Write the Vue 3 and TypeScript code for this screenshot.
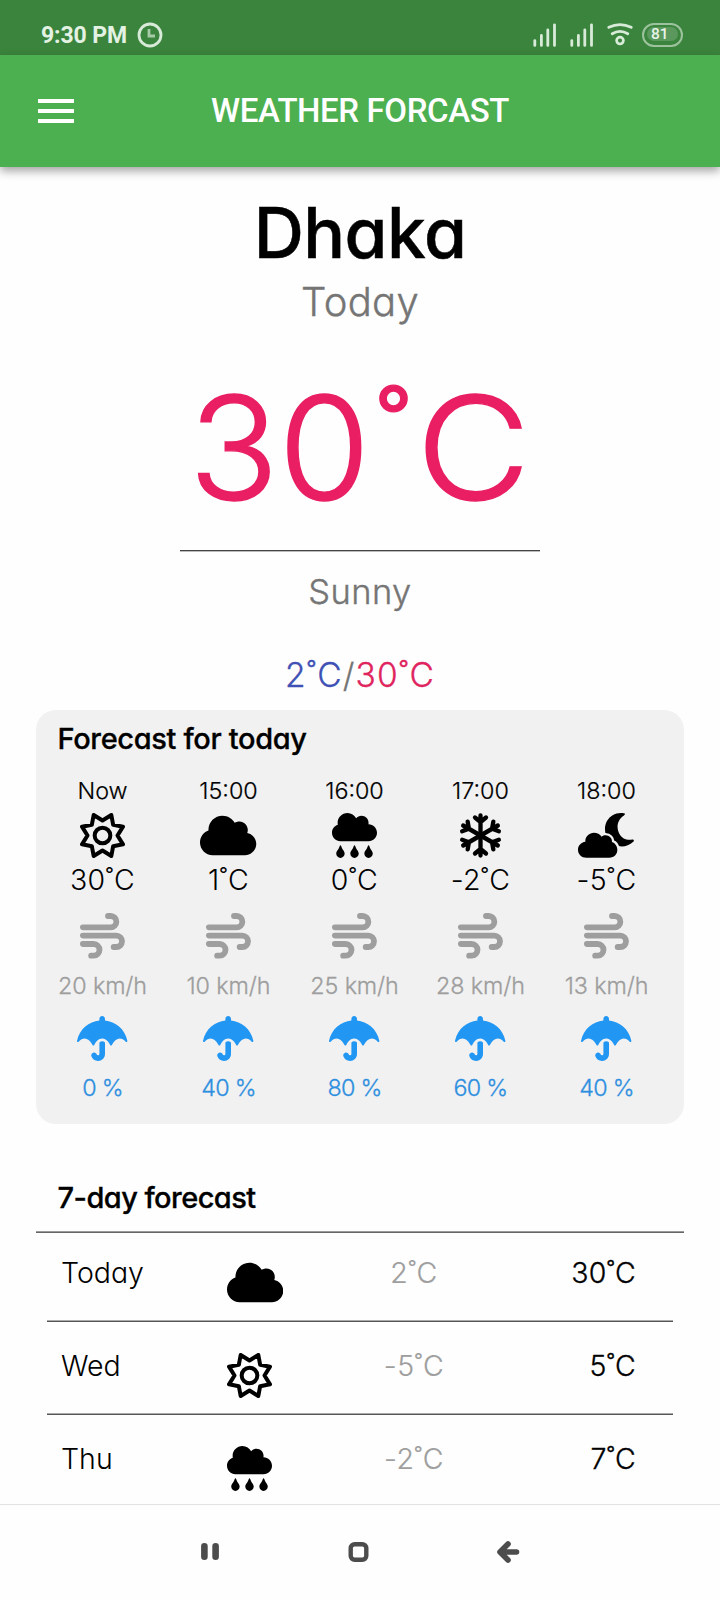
<script setup lang="ts">
type Weather = 'sun' | 'cloud' | 'rain' | 'snow' | 'night'

interface Hour { time: string; icon: Weather; temp: string; wind: string; rain: string }
interface Day { name: string; icon: Weather; low: string; high: string }

const hours: Hour[] = [
  { time: 'Now', icon: 'sun', temp: '30˚C', wind: '20 km/h', rain: '0 %' },
  { time: '15:00', icon: 'cloud', temp: '1˚C', wind: '10 km/h', rain: '40 %' },
  { time: '16:00', icon: 'rain', temp: '0˚C', wind: '25 km/h', rain: '80 %' },
  { time: '17:00', icon: 'snow', temp: '-2˚C', wind: '28 km/h', rain: '60 %' },
  { time: '18:00', icon: 'night', temp: '-5˚C', wind: '13 km/h', rain: '40 %' },
]

const days: Day[] = [
  { name: 'Today', icon: 'cloud', low: '2˚C', high: '30˚C' },
  { name: 'Wed', icon: 'sun', low: '-5˚C', high: '5˚C' },
  { name: 'Thu', icon: 'rain', low: '-2˚C', high: '7˚C' },
]

const viewBoxes: Record<Weather, string> = {
  sun: '-67.5 -67.5 135 135',
  cloud: '0 0 640 512',
  rain: '0 0 512 512',
  snow: '-67.5 -67.5 135 135',
  night: '0 0 169 135',
}

// Inner markup of each weather icon, drawn in the viewBox above.
const shapes: Record<Weather, string> = {
  sun:
    '<g fill="none" stroke="currentColor" stroke-width="12" stroke-linejoin="round">' +
    '<path d="M-26.5 -61.5L0 -45L26.5 -61.5L32 -32L61.5 -26.5L45 0L61.5 26.5L32 32L26.5 61.5L0 45L-26.5 61.5L-32 32L-61.5 26.5L-45 0L-61.5 -26.5L-32 -32Z"/>' +
    '<circle r="23.5"/></g>',
  cloud:
    '<path d="M537.6 226.6c4.1-10.7 6.4-22.4 6.4-34.6 0-53-43-96-96-96-19.7 0-38.1 6-53.3 16.2C367 64.2 315.3 32 256 32c-88.4 0-160 71.6-160 160 0 2.7.1 5.4.2 8.1C40.2 219.8 0 273.2 0 336c0 79.5 64.5 144 144 144h368c70.7 0 128-57.3 128-128 0-61.9-44-113.6-102.4-125.4z"/>',
  rain:
    '<path d="M416 128c-.6 0-1.1.2-1.6.2 1.1-5.2 1.6-10.6 1.6-16.2 0-44.2-35.8-80-80-80-24.6 0-46.3 11.3-61 28.8C256.4 24.8 219.3 0 176 0 114.1 0 64 50.1 64 112c0 7.3.8 14.3 2.1 21.2C27.8 145.8 0 181.5 0 224c0 53 43 96 96 96h320c53 0 96-43 96-96s-43-96-96-96zM88 374.2c-12.8 44.4-40 56.4-40 87.7 0 27.7 21.5 50.1 48 50.1s48-22.4 48-50.1c0-31.4-27.2-43.1-40-87.7-2.2-8.1-13.5-8.5-16 0zm160 0c-12.8 44.4-40 56.4-40 87.7 0 27.7 21.5 50.1 48 50.1s48-22.4 48-50.1c0-31.4-27.2-43.1-40-87.7-2.2-8.1-13.5-8.5-16 0zm160 0c-12.8 44.4-40 56.4-40 87.7 0 27.7 21.5 50.1 48 50.1s48-22.4 48-50.1c0-31.4-27.2-43.1-40-87.7-2.2-8.1-13.5-8.5-16 0z"/>',
  snow:
    '<g fill="none" stroke="currentColor" stroke-width="13" stroke-linecap="round" stroke-linejoin="round">' +
    [0, 60, 120, 180, 240, 300]
      .map((a) => `<path transform="rotate(${a})" d="M0 0V-60M-16.5 -54L0 -40L16.5 -54"/>`)
      .join('') +
    '</g>',
  night:
    '<path d="M137 1C143 1 141 5 137 8C118 20 114 44 124 62C132 77 146 82 160 80C166 79 170 82 166 86C145 106 114 104 96 85C72 60 78 22 104 7C114 1 126 -1 137 1Z"/>' +
    '<path d="M102 87C103 76 94 67 83 67C79 67 74 68 71 71C66 63 57 59 48 59C34 59 22 70 22 84V86C9 88 0 97 0 110C0 124 11 134 25 134H94C108 134 118 124 118 111C118 99 111 90 102 87Z" stroke="#f1f1f1" stroke-width="14" stroke-linejoin="round" paint-order="stroke"/>',
}
</script>

<template>
  <div class="screen">
    <header class="status">
      <div class="status-left">
        <span class="clock">9:30 PM</span>
        <svg width="26" height="26" viewBox="0 0 26 26" fill="none" stroke="#d8ebd8">
          <circle cx="13" cy="13" r="11" stroke-width="2.8" />
          <path d="M12 7V14H18" stroke="#a6cba7" stroke-width="2.8" />
        </svg>
      </div>
      <div class="status-right">
        <svg v-for="n in 2" :key="n" class="signal" width="24" height="24" viewBox="0 0 24 24" stroke="#d8ebd8" stroke-width="2.8" stroke-linecap="round">
          <path d="M1.8 17.6V22.4M8.4 12.4V22.4M14.8 7V22.4M21.5 1.8V22.4" />
        </svg>
        <svg class="wifi" width="26" height="24" viewBox="0 0 26 24" fill="none" stroke="#d8ebd8" stroke-linecap="round">
          <path d="M1.8 4.3Q13 -1.2 24.2 4.3" stroke-width="2.8" />
          <path d="M5.2 10.7Q13 6 20.8 10.7" stroke-width="2.8" />
          <circle cx="13" cy="17.6" r="3.4" stroke-width="2.7" />
        </svg>
        <div class="battery"><span class="level">81</span></div>
      </div>
    </header>

    <nav class="appbar">
      <button class="menu" aria-label="Menu"><i></i><i></i><i></i></button>
      <h1>WEATHER FORCAST</h1>
    </nav>

    <main class="content">
      <section class="now">
        <h2 class="city">Dhaka</h2>
        <p class="day">Today</p>
        <p class="big"><span class="digits">30</span><span class="ring">˚</span><span class="unit">C</span></p>
        <hr class="rule short" />
        <p class="sky">Sunny</p>
        <p class="range"><span class="cold">2˚C</span><span class="slash">/</span><span class="hot">30˚C</span></p>
      </section>

      <section class="card">
        <h3 class="heading">Forecast for today</h3>
        <div class="hours">
          <div v-for="h in hours" :key="h.time" class="hour">
            <span class="time">{{ h.time }}</span>
            <svg class="icon" :viewBox="viewBoxes[h.icon]" fill="currentColor" v-html="shapes[h.icon]"></svg>
            <span class="temp">{{ h.temp }}</span>
            <svg class="wind-icon" viewBox="0 0 135 137" fill="none" stroke="#9e9e9e" stroke-width="17.5" stroke-linecap="round">
              <path d="M8.7 43H92A17 17 0 0 0 92 9H84" />
              <path d="M8.7 68H109A17 17 0 0 1 109 102H101" />
              <path d="M8.7 93H41A17.5 17.5 0 0 1 41 128H33.5" />
            </svg>
            <span class="wind">{{ h.wind }}</span>
            <svg class="umbrella" viewBox="0 0 576 512" fill="#2196f3">
              <path d="M575.7 280.8C547.1 144.5 437.3 62.6 320 49.9V32c0-17.7-14.3-32-32-32s-32 14.3-32 32v17.9C138.3 62.6 29.5 144.5.3 280.8c-2.2 10.1 8.5 21.3 18.7 11.4 52-55 107.7-52.4 158.6 37 5.3 9.5 14.9 8.6 19.7 0 20.2-35.4 44.9-73.2 90.7-73.2 58.5 0 88.2 68.8 90.7 73.2 4.8 8.6 14.4 9.5 19.7 0 51-89.5 107.1-91.4 158.6-37 10.3 10 20.9-1.3 18.7-11.4zM256 301.7V432c0 8.8-7.2 16-16 16-7.8 0-13.2-5.3-15.1-10.7-5.9-16.7-24.1-25.4-40.8-19.5-16.7 5.9-25.4 24.2-19.5 40.8 11.2 31.9 41.6 53.3 75.4 53.3 44.1 0 80-35.9 80-80V301.6c-9.1-7.9-19.8-13.6-32-13.6-12.3.1-22.4 4.8-32 13.7z" />
            </svg>
            <span class="rain">{{ h.rain }}</span>
          </div>
        </div>
      </section>

      <section class="week">
        <h3 class="heading tight">7-day forecast</h3>
        <hr class="rule" />
        <div class="days">
          <div v-for="d in days" :key="d.name" class="row">
            <span class="name">{{ d.name }}</span>
            <svg class="icon" :viewBox="viewBoxes[d.icon]" fill="currentColor" v-html="shapes[d.icon]"></svg>
            <span class="low">{{ d.low }}</span>
            <span class="high">{{ d.high }}</span>
          </div>
        </div>
      </section>
    </main>

    <footer class="navbar">
      <svg width="20" height="22" viewBox="0 0 20 22" stroke="#4c4c4c" stroke-width="6.6" stroke-linecap="round"><path d="M4.4 5.3V15.7M15.6 5.3V15.7" /></svg>
      <svg width="22" height="22" viewBox="0 0 22 22" fill="none" stroke="#4c4c4c" stroke-width="4.4"><rect x="3.7" y="3.2" width="15.6" height="15.6" rx="4" /></svg>
      <svg width="24" height="24" viewBox="0 0 24 24" fill="none" stroke="#4c4c4c" stroke-width="5.6" stroke-linecap="round" stroke-linejoin="round"><path d="M12 4L4 12L12 20M5 12H20.5" /></svg>
    </footer>
  </div>
</template>

<style>
body {
  background: #fefefe;
}
</style>

<style scoped>
.screen {
  width: 720px;
  height: 1600px;
  display: flex;
  flex-direction: column;
  overflow: hidden;
  background: #fefefe;
  color: #000;
  font-family: Inter, sans-serif;
  font-feature-settings: 'cv11';
  font-weight: 300;
}
h1, h2, h3, p, hr { margin: 0; border: 0; }
svg { display: block; flex: none; }

.status {
  flex: none;
  height: 55px;
  background: #3b843d;
  display: flex;
  justify-content: space-between;
  padding: 15px 37px 0 41px;
  box-sizing: border-box;
  font-family: Roboto, sans-serif;
}
.status-left, .status-right { display: flex; height: 40px; align-items: center; }
.status-left { gap: 10px; }
.clock { font-size: 23px; font-weight: 700; color: #e4f2e4; letter-spacing: -0.1px; }
.signal { margin-right: 13px; }
.wifi { margin-right: 9px; }
.battery {
  width: 41px;
  height: 24px;
  box-sizing: border-box;
  border: 2.8px solid #9dc29e;
  border-radius: 12px;
  padding: 2px 3px;
}
.level {
  display: block;
  height: 14px;
  line-height: 15px;
  border-radius: 7px;
  background: #5b985d;
  color: #e8f4e8;
  font-size: 15.5px;
  font-weight: 500;
  padding-left: 4px;
}

.appbar {
  flex: none;
  height: 112px;
  background: #4caf50;
  display: grid;
  grid-template-columns: 120px 1fr 120px;
  align-items: center;
  box-shadow: 0 4px 9px rgba(0, 0, 0, 0.36);
  z-index: 1;
}
.menu {
  width: 36px;
  height: 24px;
  margin-left: 38px;
  padding: 0;
  border: 0;
  background: none;
  display: flex;
  flex-direction: column;
  justify-content: space-between;
}
.menu i { height: 4px; background: #fff; }
h1 {
  text-align: center;
  color: #fff;
  font: 500 33px/40px Roboto, sans-serif;
  letter-spacing: -0.4px;
}

.content { flex: 1; min-height: 0; overflow: hidden; }
.now { text-align: center; padding-top: 26px; }
.city { font-size: 69.5px; line-height: 80px; font-weight: 500; letter-spacing: -0.5px; -webkit-text-stroke: 0.5px; }
.day { margin-top: 4.5px; font-size: 40px; line-height: 48px; letter-spacing: 0.3px; color: #757575; -webkit-text-stroke: 0.4px; }
.big { margin-top: 42px; font-size: 144px; line-height: 160px; color: #e91e63; -webkit-text-stroke: 1.4px; }
.digits { display: inline-block; transform: scaleX(1.03); transform-origin: right; }
.ring { font-size: 0.84em; line-height: 0; vertical-align: 0.14em; margin: 0 11px 0 6.5px; }
.unit { display: inline-block; transform: scaleX(1.09); }
.rule { height: 2px; background: linear-gradient(#9a9a9a 50%, #666 50%); }
.rule.short { width: 360px; margin: 22.4px auto 0; background: linear-gradient(#444 50%, #bbb 50%); }
.sky { margin-top: 20px; font-size: 34.5px; line-height: 40px; letter-spacing: 0.4px; color: #757575; -webkit-text-stroke: 0.4px; }
.range { margin-top: 42.8px; font-size: 33.5px; line-height: 40px; letter-spacing: 1.2px; -webkit-text-stroke: 0.3px; }
.cold { color: #3f51b5; }
.hot { color: #e0245e; }
.slash { color: #757575; }

.card {
  margin: 15.7px 36px 0;
  height: 413.5px;
  box-sizing: border-box;
  padding-top: 10.7px;
  border-radius: 20px;
  background: #f1f1f1;
}
.heading { padding-left: 21.5px; font-size: 29px; line-height: 36px; font-weight: 500; -webkit-text-stroke: 0.3px; letter-spacing: -0.35px; }
.heading.tight { letter-spacing: -0.55px; }
.hours { display: grid; grid-template-columns: repeat(5, 126px); padding-left: 3.5px; }
.hour { display: flex; flex-direction: column; align-items: center; white-space: nowrap; }
.icon { height: 45px; }
.hour .icon { margin-top: -0.5px; margin-bottom: 0.5px; }
.time { margin: 19.8px 0 9px; font-size: 23.3px; line-height: 28px; -webkit-text-stroke: 0.2px; }
.temp { margin: 3.8px 0 17px; font-size: 28.5px; line-height: 34px; letter-spacing: 0.4px; }
.wind-icon { width: 45px; height: 45.7px; margin-top: -0.5px; margin-bottom: 0.5px; }
.wind { margin: 12.6px 0 16.4px; font-size: 23.3px; line-height: 28px; color: #9e9e9e; letter-spacing: -0.1px; -webkit-text-stroke: 0.3px; }
.umbrella { width: 50.4px; height: 45px; }
.rain { margin-top: 12.2px; font-size: 23.3px; line-height: 28px; color: #2f8fdf; letter-spacing: -0.7px; -webkit-text-stroke: 0.3px; }

.week { margin: 56.2px 36px 0; }
.week .rule { margin-top: 15.3px; }
.days { margin: 0 11px; }
.row {
  height: 93px;
  box-sizing: border-box;
  display: grid;
  grid-template-columns: 166px 90px 194px 125px;
  align-items: end;
  padding: 0 37px 17px 14px;
  background: linear-gradient(#aaa 50%, #555 50%) bottom / 100% 2px no-repeat;
  font-size: 28.5px;
  line-height: 34px;
}
.row:first-child { height: 89px; }
.row span { margin-bottom: 15.2px; }
.low { text-align: center; color: #9e9e9e; letter-spacing: 0.5px; -webkit-text-stroke: 0.2px; }
.high { text-align: right; letter-spacing: 0.3px; -webkit-text-stroke: 0.3px; }

.navbar {
  flex: none;
  height: 96px;
  box-sizing: border-box;
  border-top: 1px solid #e2e2e2;
  background: #fefefe;
  display: flex;
  justify-content: center;
  align-items: center;
  gap: 127px;
  padding: 0 0 2px;
}
</style>
